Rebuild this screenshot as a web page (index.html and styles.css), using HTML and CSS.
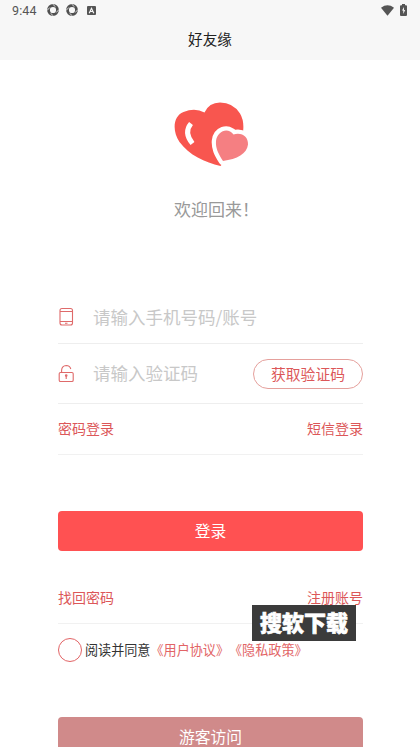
FILE: index.html
```html
<!DOCTYPE html>
<html lang="zh-CN">
<head>
<meta charset="utf-8">
<title>好友缘</title>
<link rel="stylesheet" href="styles.css">
</head>
<body>
<header class="top">
  <div class="status">
    <span class="clock">9:44</span>
    <svg class="ring" viewBox="0 0 12 12"><circle cx="6" cy="6" r="4.5"/><path d="M5.500 0l3 2.800M12 5.500L9.200 8.500M6.500 12L3.500 9.200M0 6.500l2.800-3"/></svg>
    <svg class="ring" viewBox="0 0 12 12"><circle cx="6" cy="6" r="4.5"/><path d="M5.500 0l3 2.800M12 5.500L9.200 8.500M6.500 12L3.500 9.200M0 6.500l2.800-3"/></svg>
    <svg class="app" viewBox="0 0 9 9"><rect width="9" height="9" rx="1" fill="#555"/><path d="M2.2 7.2L4.5 2.3l2.3 4.9M3.2 5.5h2.6" fill="none" stroke="#f7f7f7" stroke-width="1.2"/></svg>
    <svg class="wifi" viewBox="0 0 13 11"><path d="M0 2.7Q6.5-2.2 13 2.7L6.5 10.8z" fill="#555"/></svg>
    <svg class="battery" viewBox="0 0 7 12"><path d="M2 0h3v1.2h1q1 0 1 1V11q0 1-1 1H1q-1 0-1-1V2.2q0-1 1-1h1z" fill="#555"/><path d="M4 3L2 6.600h1.300V10L5.200 6H4z" fill="#f7f7f7"/></svg>
  </div>
  <h1>好友缘</h1>
</header>
<main>
  <svg class="logo" viewBox="0 0 76 66">
    <path d="M46.500 65C31 61.500 15 54 5.500 41C-2 30 -1 15 9.500 11Q21 6.500 30.500 11.500Q35 1.500 46 1.500Q59 1.500 66 12.500Q70.500 20 69 31L60 50Z" fill="#f8564f"/>
    <path d="M49 60C44 52 41.500 47 42 40C43 30 54 25.500 59.500 33.500C68 31 74.500 36 74 43.500C73 53 63 58 49 60Z" fill="#f57f82" stroke="#fff" stroke-width="8.500" paint-order="stroke" stroke-linejoin="round"/>
    <path d="M17 22.500Q9.500 31.500 18.500 42.500" fill="none" stroke="#fff" stroke-width="5"/>
  </svg>
  <p class="welcome">欢迎回来！</p>
  <div class="field phone">
    <svg viewBox="0 0 16 20"><rect x="2" y="1.500" width="12.500" height="16.500" rx="2"/><path d="M2 4.500H14.500M2 14.500H14.500M7 16.300h2.500"/></svg>
    <span>请输入手机号码/账号</span>
  </div>
  <div class="field code">
    <svg viewBox="0 0 16 20"><rect x="1.200" y="8.500" width="14" height="9" rx="1.300"/><path d="M3.600 8.500V6.200Q3.900 1.700 8.200 1.500Q11.900 1.500 12.800 5M8.200 11v4"/><circle cx="8.200" cy="11.500" r=".8"/></svg>
    <span>请输入验证码</span>
    <button class="send">获取验证码</button>
  </div>
  <div class="links modes"><a>密码登录</a><a>短信登录</a></div>
  <button class="login">登录</button>
  <div class="links account"><a>找回密码</a><a>注册账号</a><strong class="mark">搜软下载</strong></div>
  <div class="agree"><i></i><span>阅读并同意<a>《用户协议》《隐私政策》</a></span></div>
  <button class="guest">游客访问</button>
</main>
</body>
</html>
```
FILE: styles.css
```css
* { box-sizing: border-box; }
body {
  margin: 0;
  height: 747px;
  overflow: hidden;
  background: #fff;
  font-family: "Noto Sans CJK SC", sans-serif;
  color: #333;
}
svg { display: block; flex: none; }
button { border: 0; padding: 0; font-family: inherit; display: block; }
.top { height: 60px; background: #f7f7f7; }
.status { height: 20px; display: flex; align-items: center; padding: 0 13px 0 12px; }
.clock { font: 12.5px/20px Roboto, sans-serif; color: #555; width: 35px; letter-spacing: .1px; padding-top: 2px; }
.ring { width: 12px; height: 12px; margin-right: 7px; fill: none; stroke: #505050; stroke-width: 2.8; }
.ring path { stroke: #f7f7f7; stroke-width: .8; }
.app { width: 9px; height: 9px; margin-left: 2px; }
.wifi { width: 13px; height: 11px; margin-left: auto; margin-right: 6px; }
.battery { width: 7px; height: 12px; }
h1 { margin: 0; font-size: 14.6px; line-height: 38px; height: 40px; font-weight: 400; text-align: center; color: #222; }
main { padding: 41px 57px 0 58px; }
.logo { width: 76px; height: 66px; margin-left: 116px; }
.welcome { margin: 28px 0 0 116px; height: 28px; line-height: 28px; font-size: 17px; color: #999; }
.field { display: flex; align-items: center; border-bottom: 1px solid #eee; font-size: 17.5px; color: #c8c8c8; }
.field span { padding-bottom: 2px; }
.field svg { width: 16px; height: 20px; margin-right: 19px; fill: none; stroke: #df6a6a; stroke-width: 1.1; }
.phone { margin-top: 68px; height: 53px; }
.code { height: 60px; }
.send { margin-left: auto; width: 110px; height: 30px; border: 1px solid #e5a09c; border-radius: 15px; background: #fff; color: #dc5759; font-size: 14.8px; line-height: 28px; }
.links { position: relative; display: flex; justify-content: space-between; align-items: center; height: 51px; padding-bottom: 2px; border-bottom: 1px solid #f1f1f1; font-size: 14px; color: #dc5759; }
.login { width: 305px; height: 40px; margin-top: 56px; padding-bottom: 2px; border-radius: 4px; background: #ff5152; color: #fff; font-size: 15.8px; }
.account { margin-top: 22px; }
.mark { position: absolute; left: 194px; top: 32px; width: 104px; height: 36px; background: #3b3b3b; color: #fff; font-size: 22px; line-height: 32px; font-weight: 900; text-align: center; -webkit-text-stroke: .6px #fff; }
.agree { display: flex; align-items: center; height: 51px; font-size: 13.1px; white-space: nowrap; text-spacing-trim: space-all; }
.agree span { padding-bottom: 1px; }
.agree i { width: 24px; height: 24px; border: 1px solid #e26466; border-radius: 50%; margin-right: 3px; }
.agree a { color: #e26466; }
.guest { width: 305px; height: 40px; margin-top: 42px; padding-bottom: 1px; border-radius: 4px; background: #d08a8a; color: #fff; font-size: 15.8px; }
```
